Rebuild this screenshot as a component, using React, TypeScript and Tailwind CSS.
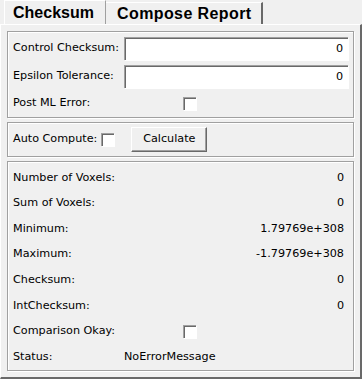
const font = "font-['DejaVu_Sans',sans-serif] text-[11.2px] text-black";

const Field = ({ value }: { value: string }) => (
  <div className="flex-1 h-[23px] bg-white border-t border-l border-t-[#a0a0a0] border-l-[#a0a0a0] shadow-[inset_1px_1px_0_#696969,1px_1px_0_#ffffff] flex items-center justify-end pr-[5px]">
    {value}
  </div>
);

const CheckBox = () => (
  <div className="w-[13px] h-[13px] bg-white border-t border-l border-t-[#a0a0a0] border-l-[#a0a0a0] shadow-[inset_1px_1px_0_#696969,1px_1px_0_#ffffff]" />
);

const Frame = ({ className, children }: { className: string; children: React.ReactNode }) => (
  <div className={"border border-[#a0a0a0] shadow-[inset_1px_1px_0_#ffffff,1px_1px_0_#ffffff] " + className}>
    {children}
  </div>
);

const rows = [
  { label: 'Number of Voxels:', value: '0' },
  { label: 'Sum of Voxels:', value: '0' },
  { label: 'Minimum:', value: '1.79769e+308' },
  { label: 'Maximum:', value: '-1.79769e+308' },
  { label: 'Checksum:', value: '0' },
  { label: 'IntChecksum:', value: '0' },
];

export default function App() {
  return (
    <div className={"w-[362px] h-[379px] bg-[#f0f0f0] flex flex-col " + font}>
      {/* tabs */}
      <div className="h-[25px] flex items-end pl-[4px] font-['Liberation_Sans',sans-serif] font-bold text-[16px]">
        <div className="h-[24px] w-[102px] flex items-center pl-[8px] border-t border-l border-white border-r border-r-[#a0a0a0]">
          Checksum
        </div>
        <div className="h-[22px] w-[157px] flex items-center pl-[11px] tracking-[0.4px] border-t border-white border-r-2 border-r-[#696969]">
          Compose Report
        </div>
      </div>

      {/* tab page */}
      <div className="flex-1 flex flex-col gap-[4px] pl-[6px] pr-[6px] pt-[6px] pb-[6px] border-t border-t-white border-l border-l-white border-r-2 border-r-[#696969] border-b-2 border-b-[#696969]">
        <Frame className="h-[87px] px-[5px] pt-[5px] flex flex-col gap-[5px]">
          <div className="flex items-center">
            <span className="w-[111px]">Control Checksum:</span>
            <Field value="0" />
          </div>
          <div className="flex items-center">
            <span className="w-[111px]">Epsilon Tolerance:</span>
            <Field value="0" />
          </div>
          <div className="flex items-center h-[20px]">
            <span className="w-[170px]">Post ML Error:</span>
            <CheckBox />
          </div>
        </Frame>

        <Frame className="h-[35px] px-[5px] flex items-center">
          <span>Auto Compute:</span>
          <div className="ml-[4px]">
            <CheckBox />
          </div>
          <button className="ml-[17px] w-[76px] h-[25px] bg-[#f0f0f0] border-t border-l border-white border-r border-b border-r-[#696969] border-b-[#696969] shadow-[inset_-1px_-1px_0_#a0a0a0]">
            Calculate
          </button>
        </Frame>

        <Frame className="flex-1 pl-[5px] pr-[9px] pt-[3px] flex flex-col">
          {rows.map((r) => (
            <div key={r.label} className="h-[25.6px] flex items-center justify-between">
              <span>{r.label}</span>
              <span>{r.value}</span>
            </div>
          ))}
          <div className="h-[25.6px] flex items-center">
            <span className="w-[170px]">Comparison Okay:</span>
            <CheckBox />
          </div>
          <div className="h-[25.6px] flex items-center">
            <span className="w-[111px]">Status:</span>
            <span>NoErrorMessage</span>
          </div>
        </Frame>
      </div>
    </div>
  );
}
